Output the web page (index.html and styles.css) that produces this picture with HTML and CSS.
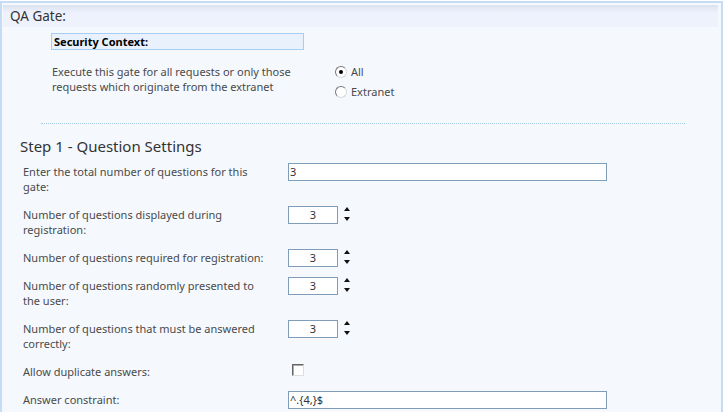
FILE: index.html
```html
<!DOCTYPE html>
<html>
<head>
<meta charset="utf-8">
<link rel="stylesheet" href="styles.css">
</head>
<body>
<div class="panel">
  <div class="panel-header">QA Gate:</div>
  <div class="security">
    <div class="sec-title">Security Context:</div>
    <div class="sec-row">
      <div class="sec-desc">Execute this gate for all requests or only those requests which originate from the extranet</div>
      <div class="radios">
        <label class="radio"><span class="radio-btn checked"></span>All</label>
        <label class="radio"><span class="radio-btn"></span>Extranet</label>
      </div>
    </div>
  </div>
  <div class="divider"></div>
  <h2 class="step">Step 1 - Question Settings</h2>
  <div class="form">
    <div class="row">
      <div class="label">Enter the total number of questions for this gate:</div>
      <div class="field"><div class="text-input wide">3</div></div>
    </div>
    <div class="row">
      <div class="label">Number of questions displayed during registration:</div>
      <div class="field"><div class="text-input num">3</div><div class="spin"><span class="up"></span><span class="down"></span></div></div>
    </div>
    <div class="row">
      <div class="label">Number of questions required for registration:</div>
      <div class="field"><div class="text-input num">3</div><div class="spin"><span class="up"></span><span class="down"></span></div></div>
    </div>
    <div class="row">
      <div class="label">Number of questions randomly presented to the user:</div>
      <div class="field"><div class="text-input num">3</div><div class="spin"><span class="up"></span><span class="down"></span></div></div>
    </div>
    <div class="row">
      <div class="label">Number of questions that must be answered correctly:</div>
      <div class="field"><div class="text-input num">3</div><div class="spin"><span class="up"></span><span class="down"></span></div></div>
    </div>
    <div class="row">
      <div class="label">Allow duplicate answers:</div>
      <div class="field"><span class="checkbox"></span></div>
    </div>
    <div class="row">
      <div class="label">Answer constraint:</div>
      <div class="field"><div class="text-input wide">^.{4,}$</div></div>
    </div>
  </div>
</div>
</body>
</html>
```
FILE: styles.css
```css
html, body {
  margin: 0;
  padding: 0;
  background: #ffffff;
  height: 100%;
}
body {
  font-family: "Noto Sans", "Open Sans", sans-serif;
  font-size: 11px;
  color: #4a4a4a;
  overflow: hidden;
}
.panel {
  margin: 1px 2px 0 0;
  border: 2px solid #c4ddf5;
  border-bottom: none;
  background: #f5f9fe;
  height: 420px;
  box-sizing: border-box;
}
.panel-header {
  margin: 2px 3px 0 1px;
  height: 22px;
  padding-left: 7px;
  font-size: 13.5px;
  line-height: 22px;
  color: #333;
  background: linear-gradient(#dae2ee 0px, #e2e8f4 3px, #e9eefa 6px, #eef2fd 9px, #eef2fd 100%);
}
.security {
  padding: 6px 0 0 49px;
}
.sec-title {
  width: 249px;
  height: 15px;
  border: 1px solid #a6cdf2;
  background: #e9f2fc;
  font-weight: bold;
  color: #000;
  font-size: 11px;
  line-height: 15px;
  padding-left: 2px;
}
.sec-row {
  display: flex;
  padding-top: 14px;
}
.sec-desc {
  width: 260px;
  line-height: 15px;
  padding-left: 1px;
  color: #4a4a4a;
}
.radios {
  display: flex;
  flex-direction: column;
  gap: 5px;
  padding-left: 23px;
}
.radio {
  display: flex;
  align-items: center;
  gap: 4px;
  line-height: 15px;
  color: #4a4a4a;
}
.radio-btn {
  width: 10px;
  height: 10px;
  border-radius: 50%;
  border: 1px solid #777;
  border-right-color: #d8d8d8;
  border-bottom-color: #d8d8d8;
  background: #fff;
  position: relative;
  box-sizing: content-box;
}
.radio-btn.checked::after {
  content: "";
  position: absolute;
  left: 3px;
  top: 3px;
  width: 4px;
  height: 4px;
  border-radius: 50%;
  background: #000;
}
.divider {
  margin: 24px 36px 0 39px;
  border-top: 1px dotted #a9cde3;
}
.step {
  margin: 12px 0 0 18px;
  font-size: 15px;
  font-weight: normal;
  color: #333;
  line-height: 20px;
}
.form {
  padding: 7px 0 0 21px;
}
.row {
  display: flex;
}
.label {
  width: 246px;
  line-height: 15px;
  padding: 1px 0 12px 0;
  color: #4a4a4a;
}
.field {
  display: flex;
  align-items: flex-start;
  height: 16px;
  padding-left: 19px;
}
.text-input {
  height: 16px;
  border: 1px solid #7f9db9;
  background: #fff;
  line-height: 16px;
  color: #333;
  font-size: 11px;
  box-sizing: content-box;
  flex: none;
}
.text-input.wide {
  width: 316px;
  padding-left: 1px;
}
.text-input.num {
  width: 48px;
  text-align: center;
}
.spin {
  display: flex;
  flex-direction: column;
  justify-content: space-between;
  height: 14px;
  margin: 1px 0 0 6px;
}
.spin .up {
  width: 0;
  height: 0;
  border-left: 3px solid transparent;
  border-right: 3px solid transparent;
  border-bottom: 4px solid #111;
}
.spin .down {
  width: 0;
  height: 0;
  border-left: 3px solid transparent;
  border-right: 3px solid transparent;
  border-top: 4px solid #111;
}
.checkbox {
  display: block;
  width: 10px;
  height: 10px;
  margin: 1px 0 0 4px;
  border: 1px solid #ddd;
  border-top-color: #666;
  border-left-color: #666;
  background: #fff;
  box-shadow: inset 1px 1px 0 #aaa;
}
```
